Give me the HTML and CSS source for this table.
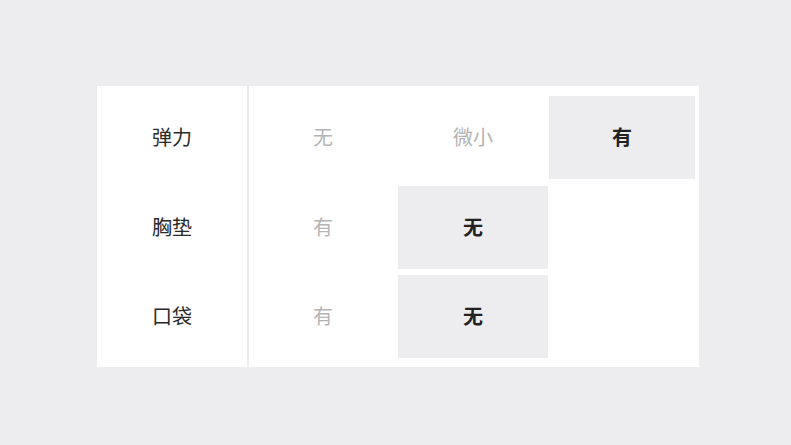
FILE: index.html
```html
<!DOCTYPE html>
<html lang="zh">
<head>
    <meta charset="utf-8">
    <title>对比</title>
    <link rel="stylesheet" href="styles.css">
</head>
<body>
    <div class="card">
        <div class="labels">
            <div class="label">弹力</div>
            <div class="label">胸垫</div>
            <div class="label">口袋</div>
        </div>
        <div class="options">
            <div class="opt">无</div>
            <div class="opt">微小</div>
            <div class="opt active">有</div>

            <div class="opt">有</div>
            <div class="opt active">无</div>
            <div class="opt"></div>

            <div class="opt">有</div>
            <div class="opt active">无</div>
            <div class="opt"></div>
        </div>
    </div>
</body>
</html>
```

FILE: styles.css
```css
body{
    margin: 0;
    height: 445px;
    background-color: #ededef;
    font-family: "Noto Sans CJK SC", "Noto Sans", sans-serif;
    padding-top: 86px;
    box-sizing: border-box;
}
.card{
    width: 602px;
    margin-left: 97px;
    background-color: #fff;
    display: flex;
    box-sizing: border-box;
}
.labels{
    width: 150px;
    border-right: 2px solid #ededef;
    display: grid;
    grid-template-rows: repeat(3, 83px);
    row-gap: 6.5px;
    padding: 10px 0 9px;
}
.label{
    display: flex;
    align-items: center;
    justify-content: center;
    padding-bottom: 2px;
    font-size: 20px;
    color: #2a2a2a;
}
.options{
    flex: 1;
    display: grid;
    grid-template-columns: 148px 150px 1fr;
    grid-template-rows: repeat(3, 83px);
    column-gap: 1px;
    row-gap: 6.5px;
    padding: 10px 4px 9px 0;
}
.opt{
    display: flex;
    align-items: center;
    justify-content: center;
    padding-bottom: 2px;
    font-size: 20px;
    color: #b4b4b4;
}
.opt.active{
    background-color: #ededef;
    color: #222;
    font-weight: 700;
}
```
